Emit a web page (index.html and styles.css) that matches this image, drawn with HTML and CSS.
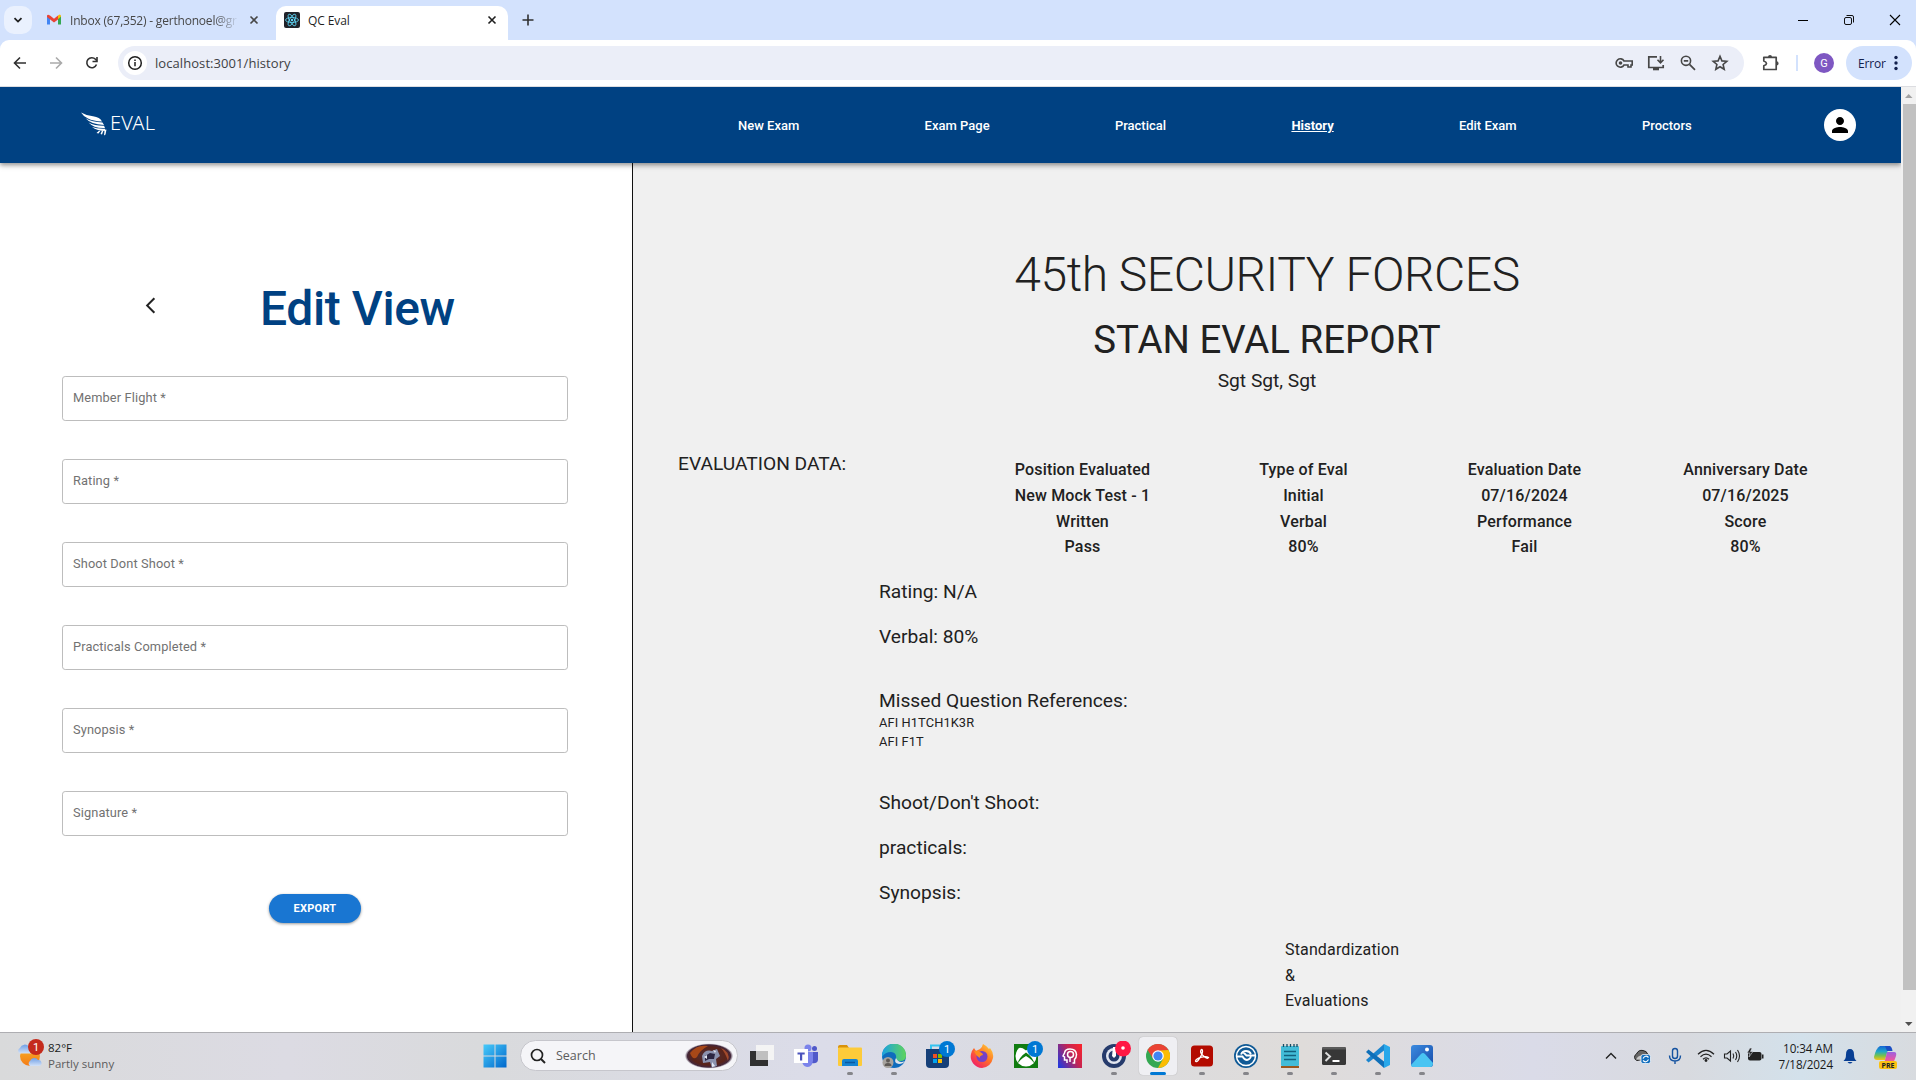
FILE: index.html
```html
<!DOCTYPE html>
<html lang="en">
<head>
<meta charset="utf-8">
<title>QC Eval</title>
<link rel="stylesheet" href="styles.css">
</head>
<body>
<div class="screen">
  <div class="tabstrip">
    <div class="tab-search"><svg width="12" height="12" viewBox="0 0 12 12"><path d="M2.5 4.2 6 7.6 9.500 4.200" fill="none" stroke="#1f1f1f" stroke-width="1.8"/></svg></div>
    <div class="tab tab-idle">
      <svg class="fav" width="16" height="16" viewBox="0 0 16 16"><path d="M1 3.500v9h3V6z" fill="#4285f4"/><path d="M15 3.500v9h-3V6z" fill="#34a853"/><path d="M12 3.400 13.500 2.500Q15 2.500 15 4.500L12 7.200z" fill="#fbbc04"/><path d="M4 3.600 8 6.800 12 3.600V7.400L8 10.500 1 5V3.800Q1.500 2 4 3.600z" fill="#ea4335"/></svg>
      <span class="tab-title faded">Inbox (67,352) - gerthonoel@gr</span>
      <svg class="x" width="10" height="10" viewBox="0 0 10 10"><path d="M1.500 1.500 8.500 8.500M8.500 1.500 1.500 8.500" stroke="#474747" stroke-width="1.600"/></svg>
    </div>
    <div class="tab tab-active">
      <svg class="fav" width="16" height="16" viewBox="0 0 16 16"><rect width="16" height="16" rx="2" fill="#20232a"/><g fill="none" stroke="#61dafb" stroke-width=".8"><ellipse cx="8" cy="8" rx="6.500" ry="2.500"/><ellipse cx="8" cy="8" rx="6.500" ry="2.500" transform="rotate(60 8 8)"/><ellipse cx="8" cy="8" rx="6.500" ry="2.500" transform="rotate(120 8 8)"/></g><circle cx="8" cy="8" r="1.200" fill="#61dafb"/></svg>
      <span class="tab-title">QC Eval</span>
      <svg class="x" width="10" height="10" viewBox="0 0 10 10"><path d="M1.500 1.500 8.500 8.500M8.500 1.500 1.500 8.500" stroke="#1f1f1f" stroke-width="1.600"/></svg>
    </div>
    <svg class="plus" width="12" height="12" viewBox="0 0 12 12"><path d="M6 .5v11M.5 6h11" stroke="#303030" stroke-width="1.600"/></svg>
    <div class="winctl">
      <svg width="46" height="40" viewBox="0 0 46 40"><path d="M18 20.500h10" stroke="#000"/></svg>
      <svg width="46" height="40" viewBox="0 0 46 40"><g fill="none" stroke="#111"><rect x="18.500" y="17.500" width="7" height="7" rx="1.500"/><path d="M20.500 15.500H26a1.500 1.500 0 0 1 1.500 1.500v5.500"/></g></svg>
      <svg width="46" height="40" viewBox="0 0 46 40"><path d="M18 15 28 25M28 15 18 25" stroke="#000" stroke-width="1.100"/></svg>
    </div>
  </div>

  <div class="toolbar">
    <div class="navbtns">
      <svg width="36" height="24" viewBox="0 0 36 24"><path d="M24 12H13M18 6.500 12.500 12 18 17.500" fill="none" stroke="#303030" stroke-width="1.600"/></svg>
      <svg width="36" height="24" viewBox="0 0 36 24"><path d="M12 12h11M18 6.500 23.500 12 18 17.500" fill="none" stroke="#aaa" stroke-width="1.600"/></svg>
      <svg width="36" height="24" viewBox="0 0 36 24"><path d="M22.500 13.500a5 5 0 1 1-1-5.200L22.800 9.800" fill="none" stroke="#303030" stroke-width="1.600"/><path d="M23 6v4.500h-4.500" fill="none" stroke="#303030" stroke-width="1.600"/></svg>
    </div>
    <div class="omnibox">
      <span class="info"><svg width="16" height="16" viewBox="0 0 16 16"><circle cx="8" cy="8" r="6.300" fill="none" stroke="#1f1f1f" stroke-width="1.500"/><path d="M8 7v4.300M8 4.500v1.600" stroke="#1f1f1f" stroke-width="1.500"/></svg></span>
      <span class="url">localhost:3001/history</span>
      <div class="omni-icons">
        <svg width="20" height="20" viewBox="0 0 20 20"><g fill="none" stroke="#474747" stroke-width="1.600"><path d="M10 8H18.200V12H17v2h-3v-2h-4a4.200 4.200 0 1 1 0-4z"/></g><circle cx="6.500" cy="10" r="1.800" fill="#474747"/></svg>
        <svg width="20" height="20" viewBox="0 0 20 20"><path d="M11 3.800H2.800V14.500H17.200V12" fill="none" stroke="#474747" stroke-width="1.700"/><path d="M14.500 3v6.500M11.500 6.800l3 3 3-3" fill="none" stroke="#474747" stroke-width="1.600"/><path d="M7 15h6v2.300H7z" fill="#474747"/></svg>
        <svg width="20" height="20" viewBox="0 0 20 20"><circle cx="8" cy="7.800" r="4.600" fill="none" stroke="#474747" stroke-width="1.600"/><path d="M11.500 11.300 17 16.800M5.800 7.800h4.400" stroke="#474747" stroke-width="1.700"/></svg>
        <svg width="20" height="20" viewBox="0 0 20 20"><path d="M10 3.300 11.900 7.900 16.800 8.300 13.100 11.500 14.200 16.300 10 13.800 5.800 16.300 6.900 11.500 3.200 8.300 8.100 7.900z" fill="none" stroke="#474747" stroke-width="1.600"/></svg>
      </div>
    </div>
    <svg class="puzzle" width="20" height="20" viewBox="0 0 20 20"><path d="M3.800 4.300H16.200V16.500H3.800V12.800Q6.500 11.800 6.500 10.400T3.800 8z" fill="none" stroke="#474747" stroke-width="1.700" stroke-linejoin="round"/><path d="M8 4a2 2 0 0 1 4 0zM16.500 8.300a2 2 0 0 1 0 4.200z" fill="#474747"/></svg>
    <span class="tdiv"></span>
    <span class="gavatar">G</span>
    <span class="errpill">Error<svg width="4" height="16" viewBox="0 0 4 16" fill="#12204d"><circle cx="2" cy="2.500" r="1.700"/><circle cx="2" cy="8" r="1.700"/><circle cx="2" cy="13.500" r="1.700"/></svg></span>
  </div>

  <div class="viewport">
    <div class="page">
      <header class="appbar">
        <div class="logo">
          <svg width="30" height="24" viewBox="0 0 30 24" fill="#fff"><path d="M1 .5Q6 3.500 13 4.200Q20 5 22 9.500Q13 9 8 6.500Q3 4 1 .5z"/><path d="M5.500 6.300Q12 10.200 22.500 10.500L24 13Q11 12.500 5.500 6.300z"/><path d="M8.500 10.500Q15 14 24 13.800L25 16Q14 16.500 8.500 10.500z"/><path d="M12 15Q17 17 25 16.700L26 19Q17 19 12 15z"/><path d="M26.500 17.500 25.500 22.500 24 23.500 24.500 18.500zM23.500 18.500 22 22.500 20.500 22 22 18.500zM20.500 18.800 18.500 21.500 16.500 21 19 18.800z"/></svg>
          <span>EVAL</span>
        </div>
        <nav class="nav">
          <a>New Exam</a><a>Exam Page</a><a>Practical</a><a class="current">History</a><a>Edit Exam</a><a>Proctors</a>
        </nav>
        <div class="user"><svg width="24" height="24" viewBox="0 0 24 24"><path d="M12 12c2.210 0 4-1.790 4-4s-1.790-4-4-4-4 1.790-4 4 1.790 4 4 4zm0 2c-2.670 0-8 1.340-8 4v2h16v-2c0-2.660-5.330-4-8-4z"/></svg></div>
      </header>
      <main class="body">
        <section class="editor">
          <div class="edit-head">
            <svg class="back" width="19" height="19" viewBox="0 0 24 24"><path d="M17.770 3.770 16 2 6 12l10 10 1.770-1.770L9.540 12z" fill="#222"/></svg>
            <h1>Edit View</h1>
          </div>
          <form class="fields">
            <label>Member Flight *</label>
            <label>Rating *</label>
            <label>Shoot Dont Shoot *</label>
            <label>Practicals Completed *</label>
            <label>Synopsis *</label>
            <label>Signature *</label>
          </form>
          <div class="export">EXPORT</div>
        </section>
        <section class="report">
          <h2>45th SECURITY FORCES</h2>
          <h3>STAN EVAL REPORT</h3>
          <p class="member">Sgt Sgt, Sgt</p>
          <div class="evalrow">
            <p class="evallabel">EVALUATION DATA:</p>
            <div class="grid">
              <span>Position Evaluated</span><span>Type of Eval</span><span>Evaluation Date</span><span>Anniversary Date</span>
              <span>New Mock Test - 1</span><span>Initial</span><span>07/16/2024</span><span>07/16/2025</span>
              <span>Written</span><span>Verbal</span><span>Performance</span><span>Score</span>
              <span>Pass</span><span>80%</span><span>Fail</span><span>80%</span>
            </div>
          </div>
          <div class="details">
            <p>Rating: N/A</p>
            <p>Verbal: 80%</p>
            <p class="missed">Missed Question References:</p>
            <div class="refs">AFI H1TCH1K3R</div>
            <div class="refs">AFI F1T</div>
            <p class="shoot">Shoot/Don't Shoot:</p>
            <p>practicals:</p>
            <p>Synopsis:</p>
          </div>
          <div class="sign">Standardization<br>&amp;<br>Evaluations</div>
        </section>
      </main>
    </div>
    <div class="scrollbar">
      <svg width="15" height="17" viewBox="0 0 15 17"><path d="M4 11h7.500L7.700 7z" fill="#a3a3a3"/></svg>
      <div class="thumb"></div>
      <svg width="15" height="17" viewBox="0 0 15 17"><path d="M4 7h7.500L7.700 11z" fill="#505050"/></svg>
    </div>
  </div>

  <div class="taskbar">
    <div class="weather">
      <svg width="30" height="30" viewBox="0 0 30 30"><defs><linearGradient id="sun" x2="0" y2="1"><stop offset="0" stop-color="#f7b32b"/><stop offset="1" stop-color="#f47b16"/></linearGradient><linearGradient id="cl" x2="0" y2="1"><stop offset="0" stop-color="#6f9fe6"/><stop offset="1" stop-color="#d3e2f8"/></linearGradient></defs><circle cx="13" cy="17" r="10" fill="url(#sun)"/><path d="M3 14.500a3 3 0 0 1 0-5.500 5 5 0 0 1 9-1l2 6.500z" fill="url(#cl)"/><path d="M13 27a3 3 0 0 1 0-5 4.500 4.500 0 0 1 8-1 3 3 0 0 1 1 6z" fill="url(#cl)"/><circle cx="19" cy="8" r="8" fill="#c42b1c"/><text x="19" y="12" class="num">1</text></svg>
      <div class="wtext"><span>82°F</span><span class="sub">Partly sunny</span></div>
    </div>
    <div class="apps">
      <div class="app"><svg width="24" height="24" viewBox="0 0 24 24"><defs><linearGradient id="win" x2="1" y2="1"><stop offset="0" stop-color="#48cbfa"/><stop offset="1" stop-color="#0067cc"/></linearGradient></defs><path d="M.5.500h11v11H.5zM12.500.5h11v11h-11zM.5 12.500h11v11H.5zM12.500 12.500h11v11h-11z" fill="url(#win)"/></svg></div>
      <div class="search">
        <svg width="16" height="16" viewBox="0 0 16 16"><circle cx="7" cy="7" r="5.500" fill="none" stroke="#222" stroke-width="1.700"/><path d="M11 11l4 4" stroke="#222" stroke-width="2"/></svg>
        <span>Search</span>
        <svg class="art" width="48" height="26" viewBox="0 0 48 26"><defs><radialGradient id="art"><stop offset="0" stop-color="#4a3340"/><stop offset=".7" stop-color="#5a2318"/><stop offset=".9" stop-color="#43273a"/><stop offset="1" stop-color="#8a7c8c" stop-opacity=".2"/></radialGradient></defs><ellipse cx="24" cy="13" rx="24" ry="12.500" fill="url(#art)"/><path d="M5 10Q12 1 23 3 15 7 12 14 8 18 5 10z" fill="#a84818"/><path d="M36 5Q46 9 43 18 40 9 36 5z" fill="#a14a2c"/><path d="M17 13Q20 6 27 8L32 6 35 13 31 16 32 23 27 25 25 19 18 20z" fill="#8b92ae"/><path d="M20 13l5-3 5 1-1 5-5 0-4 2z" fill="#2b2642"/><path d="M28 7l3 1-1 2zM27 19l3 4-3 1zM19 14l3-2v4z" fill="#e2e7f3"/></svg>
      </div>
      <div class="app"><svg width="24" height="24" viewBox="0 0 24 24"><rect y="7" width="18" height="15" fill="#303030"/><rect x="6" y="1" width="18" height="15" fill="#f4f4f4"/><rect x="6" y="7" width="12" height="9" fill="#bfbfbf"/></svg></div>
      <div class="app"><svg width="24" height="24" viewBox="0 0 24 24"><circle cx="14" cy="4" r="3.500" fill="#7b83eb"/><circle cx="20.500" cy="4.500" r="2.500" fill="#5059c9"/><path d="M18 8h6v8q-1 4-6 3z" fill="#5059c9"/><path d="M8 8h11v9q-1 6-6 6-5-1-5-7z" fill="#7b83eb"/><rect y="5" width="14" height="14" fill="#fff"/><path d="M3.500 8.500h7.200v2H8.200v6H6v-6H3.500z" fill="#4b53bc"/></svg></div>
      <div class="app run"><svg width="24" height="24" viewBox="0 0 24 24"><path d="M0 3q0-2 2-2h7l2 3H0z" fill="#d9920a"/><rect y="3.500" width="24" height="18.500" rx="1" fill="#fdcb3a"/><path d="M4 22v-5q0-2 2-2h12q2 0 2 2v5z" fill="#1583d1"/><path d="M7 18.500h10" stroke="#0a58a0" stroke-width="1.500"/></svg></div>
      <div class="app run"><svg width="24" height="24" viewBox="0 0 24 24"><defs><linearGradient id="edge"><stop offset="0" stop-color="#1ba1e2"/><stop offset="1" stop-color="#5fd45b"/></linearGradient></defs><circle cx="12" cy="12" r="12" fill="#0f6cbd"/><path d="M0 11A12 12 0 0 1 24 12q0 5-6 5-4 0-4-3 1-5-5-6-6 0-9 5z" fill="url(#edge)"/><path d="M14 14q-3 5 3 6 4 0 6-3-6 3-9-3z" fill="#dfe3ea"/><circle cx="6" cy="18.500" r="5.500" fill="#a7a39e"/><circle cx="6" cy="16.500" r="2" fill="#5e5a56"/><path d="M2.500 22q0-3 3.500-3t3.500 3z" fill="#5e5a56"/></svg></div>
      <div class="app"><svg width="34" height="30" viewBox="0 0 34 30"><path d="M10 8V4.500h10V8" fill="none" stroke="#35c4f0" stroke-width="2"/><path d="M5 8h23v15q0 4-4 4H9q-4 0-4-4z" fill="#153f78"/><path d="M12 13h4v4h-4z" fill="#f25022"/><path d="M17 13h4v4h-4z" fill="#7fba00"/><path d="M12 18h4v4h-4z" fill="#00a4ef"/><path d="M17 18h4v4h-4z" fill="#ffb900"/><circle cx="26" cy="8" r="8" fill="#0078d4"/><text x="26" y="12" class="num">1</text></svg></div>
      <div class="app"><svg width="24" height="24" viewBox="0 0 24 24"><defs><linearGradient id="ff" x1="1" y1="0" x2=".2" y2="1"><stop offset="0" stop-color="#ffe03d"/><stop offset=".5" stop-color="#ff7326"/><stop offset="1" stop-color="#f0186d"/></linearGradient></defs><path d="M12 24A11.500 11.500 0 0 1 1 10q1-4 3-6l2 3 4-2q2-1 3-5 4 2 6 5l1-1q4 5 3 10-2 9-11 10z" fill="url(#ff)"/><circle cx="12" cy="12.500" r="5.500" fill="#7541c8"/><path d="M4 7q5-1 6 1 3 1 3 3-4 1-3 3-4-2-6-7z" fill="#ff8a20"/></svg></div>
      <div class="app"><svg width="34" height="30" viewBox="0 0 34 30"><rect x="5" y="3" width="24" height="24" fill="#107c10"/><circle cx="17" cy="15" r="10.500" fill="#fff"/><path d="M8 24Q10 16 17 11.500 24 16 26 24q-2-5-9-9-7 4-9 9z" fill="#107c10"/><path d="M10 6.500q4 0 7 3 3-3 7-3-4-3-7-3t-7 3z" fill="#107c10"/><circle cx="26" cy="8" r="8" fill="#0078d4"/><text x="26" y="12" class="num">1</text></svg></div>
      <div class="app"><svg width="24" height="24" viewBox="0 0 24 24"><defs><linearGradient id="head" x1="0" y1=".8" x2="1" y2=".2"><stop offset="0" stop-color="#2938d8"/><stop offset=".6" stop-color="#c32453"/><stop offset="1" stop-color="#f52430"/></linearGradient></defs><rect width="24" height="24" fill="url(#head)"/><g fill="none" stroke="#fff" stroke-width="1.500"><path d="M9 19v-3H6.500v-3l-1.500-1L6.500 9q.5-4 5.500-4 6 0 6.500 5.500 0 3-2 5V19h-2"/><circle cx="12.500" cy="10.500" r="3"/><path d="M12 13.500V18"/></g></svg></div>
      <div class="app run"><svg width="34" height="30" viewBox="0 0 34 30"><circle cx="17" cy="15" r="12" fill="#263b6c"/><circle cx="17" cy="15" r="8" fill="#e2e6f0"/><circle cx="17" cy="15" r="5.500" fill="#263b6c"/><path d="M16 6h3v9l-2 2-2-2z" fill="#fff"/><circle cx="26" cy="7.500" r="8" fill="#ff1744"/><circle cx="26" cy="7" r="1.800" fill="#fff"/></svg></div>
      <div class="app active"><svg width="24" height="24" viewBox="0 0 24 24"><circle cx="12" cy="12" r="12" fill="#34a853"/><path d="M1.600 6A12 12 0 0 1 22.400 6L12 7.500 7 14.500z" fill="#ea4335"/><path d="M22.400 6A12 12 0 0 1 12 24l5-9-3-8.500z" fill="#fbbc04"/><circle cx="12" cy="12" r="5.800" fill="#fff"/><circle cx="12" cy="12" r="4.600" fill="#4285f4"/></svg></div>
      <div class="app run"><svg width="24" height="24" viewBox="0 0 24 24"><rect x="1" y="1.500" width="22" height="21" rx="3.500" fill="#b30b00"/><path d="M5.500 17q1-2.500 6-3.800t7 .3q-1 2-5-1.500T11 6q1.500-1.500 1.500 1.500T8 16.500q-2 2-2.500.5z" fill="none" stroke="#fff" stroke-width="1.300"/></svg></div>
      <div class="app run"><svg width="24" height="24" viewBox="0 0 24 24"><circle cx="12" cy="12" r="12" fill="#105a96"/><circle cx="12" cy="12" r="9.500" fill="none" stroke="#fff" stroke-width="1.500"/><path d="M3 12.500h5.500Q10.500 16 13 16t4-3.500M21 11.500H12.500L9 8M7 10.500Q8.500 7 12 7t5 3" fill="none" stroke="#fff" stroke-width="1.800"/></svg></div>
      <div class="app run"><svg width="24" height="24" viewBox="0 0 24 24"><rect x="3" y="2" width="18" height="20" rx="1" fill="#43bcd8"/><path d="M3 22h18v2H3z" fill="#9a5820"/><path d="M6 7.500h12M6 11.500h12M6 15.500h12" stroke="#13607e" stroke-width="1.400"/><path d="M5.500 0v3M9 0v3M12.500 0v3M16 0v3M19 0v3" stroke="#174c63" stroke-width="1.300"/></svg></div>
      <div class="app run"><svg width="24" height="24" viewBox="0 0 24 24"><rect y="3" width="24" height="18" rx="1.500" fill="#373737"/><path d="M0 5.500V4.500Q0 3 1.500 3h21Q24 3 24 4.500v1z" fill="#5a5a5a"/><path d="M3.500 8.500 8 12.500 3.500 17" fill="none" stroke="#ddd" stroke-width="2"/><path d="M10.500 17h7" stroke="#fff" stroke-width="2"/></svg></div>
      <div class="app run"><svg width="24" height="24" viewBox="0 0 24 24"><path d="M18 0l6 3v18l-6 3z" fill="#28a8ea"/><path d="M18 0 0 16l2.500 2.500L18 6.500z" fill="#1b85cf"/><path d="M18 24 0 8l2.500-2.500L18 17.500z" fill="#0f6fb8"/></svg></div>
      <div class="app run"><svg width="24" height="24" viewBox="0 0 24 24"><defs><linearGradient id="ph" x2="1" y2="1"><stop offset="0" stop-color="#3b8be0"/><stop offset="1" stop-color="#174caa"/></linearGradient></defs><rect x="1" y="1" width="22" height="22" rx="3" fill="url(#ph)"/><path d="M1 21 11 10q2-2 4 0l8 9q0 4-3 4H4q-3 0-3-2z" fill="#49c4f2"/><circle cx="17" cy="5.500" r="2" fill="#fff"/></svg></div>
    </div>
    <div class="tray">
      <svg width="32" height="24" viewBox="0 0 32 24"><path d="M11 14.500 16 9.500l5 5" fill="none" stroke="#222" stroke-width="1.400"/></svg>
      <svg width="32" height="24" viewBox="0 0 32 24"><path d="M10 16.500a3.500 3.500 0 0 1-.5-6.500q2-4.500 6.500-3.500 4 .5 4.500 3.500 3 1 2 4z" fill="#666" stroke="#222"/><path d="M9 15.500q3-5.500 8-3.500v4z" fill="#c9c9c9"/><rect x="14" y="10.500" width="9.500" height="9" rx="2" fill="#0f6cbd" stroke="#fff" stroke-width=".7"/><path d="M16 14.500q2.500-4 5.500-1M21.500 15.500q-2.500 4-5.500 1" stroke="#fff" stroke-width="1.200" fill="none"/></svg>
      <svg width="32" height="24" viewBox="0 0 32 24"><g fill="none" stroke="#1553a0" stroke-width="1.400"><rect x="13.500" y="4.500" width="5" height="10" rx="2.500"/><path d="M10.500 11.500q0 5.500 5.500 5.500t5.500-5.500M16 17v3"/></g></svg>
      <svg width="30" height="24" viewBox="0 0 28 24"><g fill="none" stroke="#222" stroke-width="1.200"><path d="M6 10.200q8-7.500 16 0M8.500 12.700q5.500-5 11 0M11 15.200q3-2.800 6 0"/></g><circle cx="14" cy="16.500" r="1.400" fill="#222"/></svg>
      <svg width="22" height="24" viewBox="1 0 22 24"><g fill="none" stroke="#222" stroke-width="1.100"><path d="M4.500 10v4h2.500l3.500 3V7L7 10zM13 9.500q1.500 2.500 0 5M15.500 8q2.500 4 0 8M17.500 6q4 6 0 12"/></g></svg>
      <svg width="24" height="24" viewBox="0 0 24 24"><rect x="5" y="8" width="13.500" height="8.500" rx="2" fill="#222"/><path d="M19 10.500h1.500v4H19z" fill="#222"/><path d="M7 4 4 9h3l-1 4 4-5.500H7.500L9 4z" fill="#222" stroke="#d8dde5" stroke-width=".6"/></svg>
      <div class="clock"><span>10:34 AM</span><span>7/18/2024</span></div>
      <svg width="30" height="24" viewBox="0 0 30 24"><path d="M8.500 17Q11 15 11 10.500q0-5.500 4-5.500t4 5.500q0 4.500 2.500 6.500z" fill="#083f94"/><path d="M12.500 18h5q-2.500 3-5 0z" fill="#083f94"/></svg>
      <svg class="copilot" width="28" height="28" viewBox="0 0 28 28"><defs><linearGradient id="cpa" x2="0" y2="1"><stop offset="0" stop-color="#1666d6"/><stop offset=".4" stop-color="#1fa8c8"/><stop offset=".7" stop-color="#79c34a"/><stop offset="1" stop-color="#f6c21c"/></linearGradient><linearGradient id="cpb" x2="0" y2="1"><stop offset="0" stop-color="#9b62e0"/><stop offset=".6" stop-color="#e456a8"/><stop offset="1" stop-color="#f98a5a"/></linearGradient></defs><path d="M8 4h9l-4 14H5q-3 0-3-3 2-9 6-11z" fill="url(#cpa)"/><path d="M15 10h7q3 0 2 4l-3 8h-9z" fill="url(#cpb)"/><path d="M13 4h5q2 1 2.500 5H15z" fill="#1b4fc4"/><rect x="7" y="19" width="18" height="8" rx="2" fill="#fbc111"/><text x="16" y="25.700" class="pre">PRE</text></svg>
    </div>
  </div>
</div>
</body>
</html>
```
FILE: styles.css
```css
* { box-sizing: border-box; }
body { margin: 0; font-family: Roboto, "Liberation Sans", sans-serif; color: #212121; overflow: hidden; }
h1, h2, h3, p { margin: 0; }
svg { display: block; flex: none; }
.screen { width: 1916px; height: 1080px; display: flex; flex-direction: column; overflow: hidden; background: #d3e2fd; }

/* browser tabs */
.tabstrip { height: 40px; flex: none; display: flex; align-items: center; font-family: "Open Sans", "Noto Sans", sans-serif; font-size: 12px; background: #d3e2fd; }
.tab-search { width: 28px; height: 28px; margin-left: 4px; border-radius: 10px; background: #eaf1fe; display: flex; align-items: center; justify-content: center; }
.tab { display: flex; align-items: center; }
.tab-idle { width: 244px; padding-left: 14px; color: #474747; }
.tab-active { width: 232px; height: 34px; align-self: flex-end; padding-left: 8px; padding-bottom: 6px; background: #fff; border-radius: 10px 10px 0 0; color: #1f1f1f; }
.tab-title { margin-left: 8px; flex: 1; white-space: nowrap; letter-spacing: -0.1px; }
.tab-idle .tab-title { flex: none; width: 167px; letter-spacing: -0.2px; }
.faded { -webkit-mask-image: linear-gradient(90deg, #000 145px, transparent 169px); mask-image: linear-gradient(90deg, #000 145px, transparent 169px); }
.x { margin-left: 12px; }
.tab-active .x { margin-right: 11px; }
.plus { margin-left: 14px; }
.winctl { display: flex; margin-left: auto; margin-right: -2px; }

.toolbar { height: 47px; flex: none; display: flex; align-items: center; background: #fff; border-bottom: 1px solid #dcdde1; border-radius: 9px 9px 0 0; padding-left: 2px; font-family: "Open Sans", "Noto Sans", sans-serif; }
.navbtns { display: flex; width: 116px; }
.omnibox { width: 1626px; height: 34px; border-radius: 17px; background: #ebeef8; display: flex; align-items: center; padding: 0 14px 0 5px; }
.info { width: 24px; height: 24px; border-radius: 50%; background: #fff; display: flex; align-items: center; justify-content: center; }
.url { margin-left: 8px; font-size: 13px; letter-spacing: 0.07px; color: #404144; }
.omni-icons { display: flex; gap: 12px; margin-left: auto; }
.puzzle { margin-left: 16px; }
.tdiv { width: 2px; height: 16px; background: #d3e2fd; margin-left: 16px; }
.gavatar { width: 20px; height: 20px; margin-left: 16px; border-radius: 50%; background: #7e57c2; color: #fff; font: 11px Roboto, sans-serif; display: flex; align-items: center; justify-content: center; }
.errpill { width: 66px; height: 34px; margin-left: 12px; border-radius: 17px; background: #d3e2fd; display: flex; align-items: center; padding: 0 14px 0 12px; justify-content: space-between; font-size: 12px; letter-spacing: -0.2px; color: #12204d; }

/* web page */
.viewport { height: 945px; flex: none; display: flex; overflow: hidden; }
.page { width: 1901px; height: 945px; display: flex; flex-direction: column; overflow: hidden; }
.appbar { height: 76px; flex: none; background: #004182; display: flex; align-items: center; z-index: 1; box-shadow: 0 2px 4px rgba(0,0,0,.3), 0 3px 6px rgba(0,0,0,.15); }
.logo { width: 738px; padding-left: 80px; display: flex; align-items: center; color: #fff; font: 300 20px/24px "Noto Sans", sans-serif; letter-spacing: .2px; }
.logo svg { margin-top: -3px; }
.logo span { margin-top: -4px; }
.nav { width: 954px; display: flex; gap: 125.300px; font-size: 13px; font-weight: 500; color: #fff; white-space: nowrap; }
.current { font-weight: 700; text-decoration: underline; }
.user { width: 32px; height: 32px; border-radius: 50%; background: #fff; margin-left: 132px; margin-top: -1px; display: flex; align-items: center; justify-content: center; }

.body { display: flex; flex: 1; min-height: 0; }
.editor { width: 633px; border-right: 1px solid #111; background: #fff; padding: 116px 64px 0 62px; }
.edit-head { display: flex; height: 58px; }
.back { margin: 17px 0 0 79px; }
.edit-head h1 { margin: 1px 0 0 100px; font-size: 48px; line-height: 58px; font-weight: 500; letter-spacing: -0.4px; color: #004182; white-space: nowrap; }
.fields { display: flex; flex-direction: column; gap: 38.150px; margin-top: 39.100px; }
.fields label { height: 44.800px; border: 1px solid #bdbdbd; border-radius: 3.200px; padding: 11px 10px; font-size: 12.800px; line-height: 20px; letter-spacing: 0.12px; color: #727272; }
.export { width: 92px; height: 29px; margin: 58px auto 0 207px; border-radius: 15px; background: #1976d2; color: #fff; font-size: 11px; font-weight: 700; letter-spacing: .25px; display: flex; align-items: center; justify-content: center; box-shadow: 0 1px 3px rgba(0,0,0,.4); }

.report { flex: 1; background: #f0f0f0; padding-top: 83px; overflow: hidden; }
.report h2 { text-align: center; font-size: 48px; font-weight: 300; line-height: 58px; letter-spacing: -0.45px; }
.report h3 { text-align: center; font-size: 38.400px; font-weight: 400; line-height: 45px; margin-top: 12.500px; }
.member { text-align: center; font-size: 19.200px; line-height: 26px; margin-top: 6.500px; }
.evalrow { display: flex; padding-left: 45px; margin-top: 57px; }
.evallabel { width: 294px; font-size: 19.200px; line-height: 26px; }
.grid { width: 884px; display: grid; grid-template-columns: repeat(4, 221px); margin-top: 6.400px; font-size: 16px; font-weight: 500; line-height: 25.600px; text-align: center; letter-spacing: .15px; }
.details { padding-left: 246px; margin-top: 19.400px; }
.details p { font-size: 19.200px; line-height: 26px; margin-bottom: 19px; }
.details .missed { margin: 38px 0 -1px; }
.refs { font-size: 12.800px; line-height: 19px; letter-spacing: .12px; }
.details .shoot { margin-top: 39px; }
.sign { padding-left: 652px; margin-top: 31px; font-size: 16px; line-height: 25.600px; letter-spacing: .15px; }

.scrollbar { width: 15px; background: #f1f1f1; display: flex; flex-direction: column; }
.thumb { height: 886px; width: 13px; margin-left: 2px; background: #c1c1c1; margin-bottom: 25px; }

/* taskbar */
.taskbar { height: 48px; flex: none; border-top: 1px solid #aeaeb2; padding-bottom: 2px; background: linear-gradient(90deg, #d9dadb, #dcdbe3 15%, #d9dadc 25%, #dbdce9 43%, #dadbe0 55%, #dfdcda 68%, #dadbe8 80%, #d8dadf 88%, #d3e1eb 94%, #d8dbdf); display: flex; align-items: center; font-family: "Open Sans", "Noto Sans", sans-serif; }
.weather { width: 473px; padding-left: 17px; display: flex; align-items: center; }
.weather svg { margin-top: -4px; }
.wtext { display: flex; flex-direction: column; font-size: 11.500px; line-height: 16px; margin-left: 1px; color: #1a1a1a; }
.wtext .sub { color: #5c5c5c; }
.apps { width: 1122px; display: flex; align-items: center; }
.app { width: 44px; height: 47px; display: flex; align-items: center; justify-content: center; position: relative; }
.run::after, .active::after { content: ""; position: absolute; left: 19px; top: 40px; width: 6px; height: 3px; border-radius: 2px; background: #85858a; }
.active::before { content: ""; position: absolute; left: 3px; top: 5px; width: 38px; height: 38px; border-radius: 4px; background: #efeff3; box-shadow: 0 0 1px #999; }
.active svg { position: relative; }
.active::after { left: 14px; width: 16px; background: #0078d4; }
.search { width: 218px; height: 31px; margin: 0 2px 0 3px; border-radius: 16px; background: #f5f5f8; border: 1px solid #c6c6cc; display: flex; align-items: center; padding: 0 4px 0 9px; font-size: 12.500px; color: #5c5c5c; }
.search span { margin-left: 10px; }
.art { margin-left: auto; }
.tray { display: flex; align-items: center; flex: none; }
.clock { width: 68px; padding-right: 2px; display: flex; flex-direction: column; align-items: flex-end; font-size: 11.700px; line-height: 16px; letter-spacing: -.1px; color: #1a1a1a; white-space: nowrap; }
.copilot { margin-left: 7px; }
.num { font: 11px Roboto, sans-serif; fill: #fff; text-anchor: middle; }
.pre { font: 700 7px "Open Sans", sans-serif; text-anchor: middle; fill: #222; }
```
